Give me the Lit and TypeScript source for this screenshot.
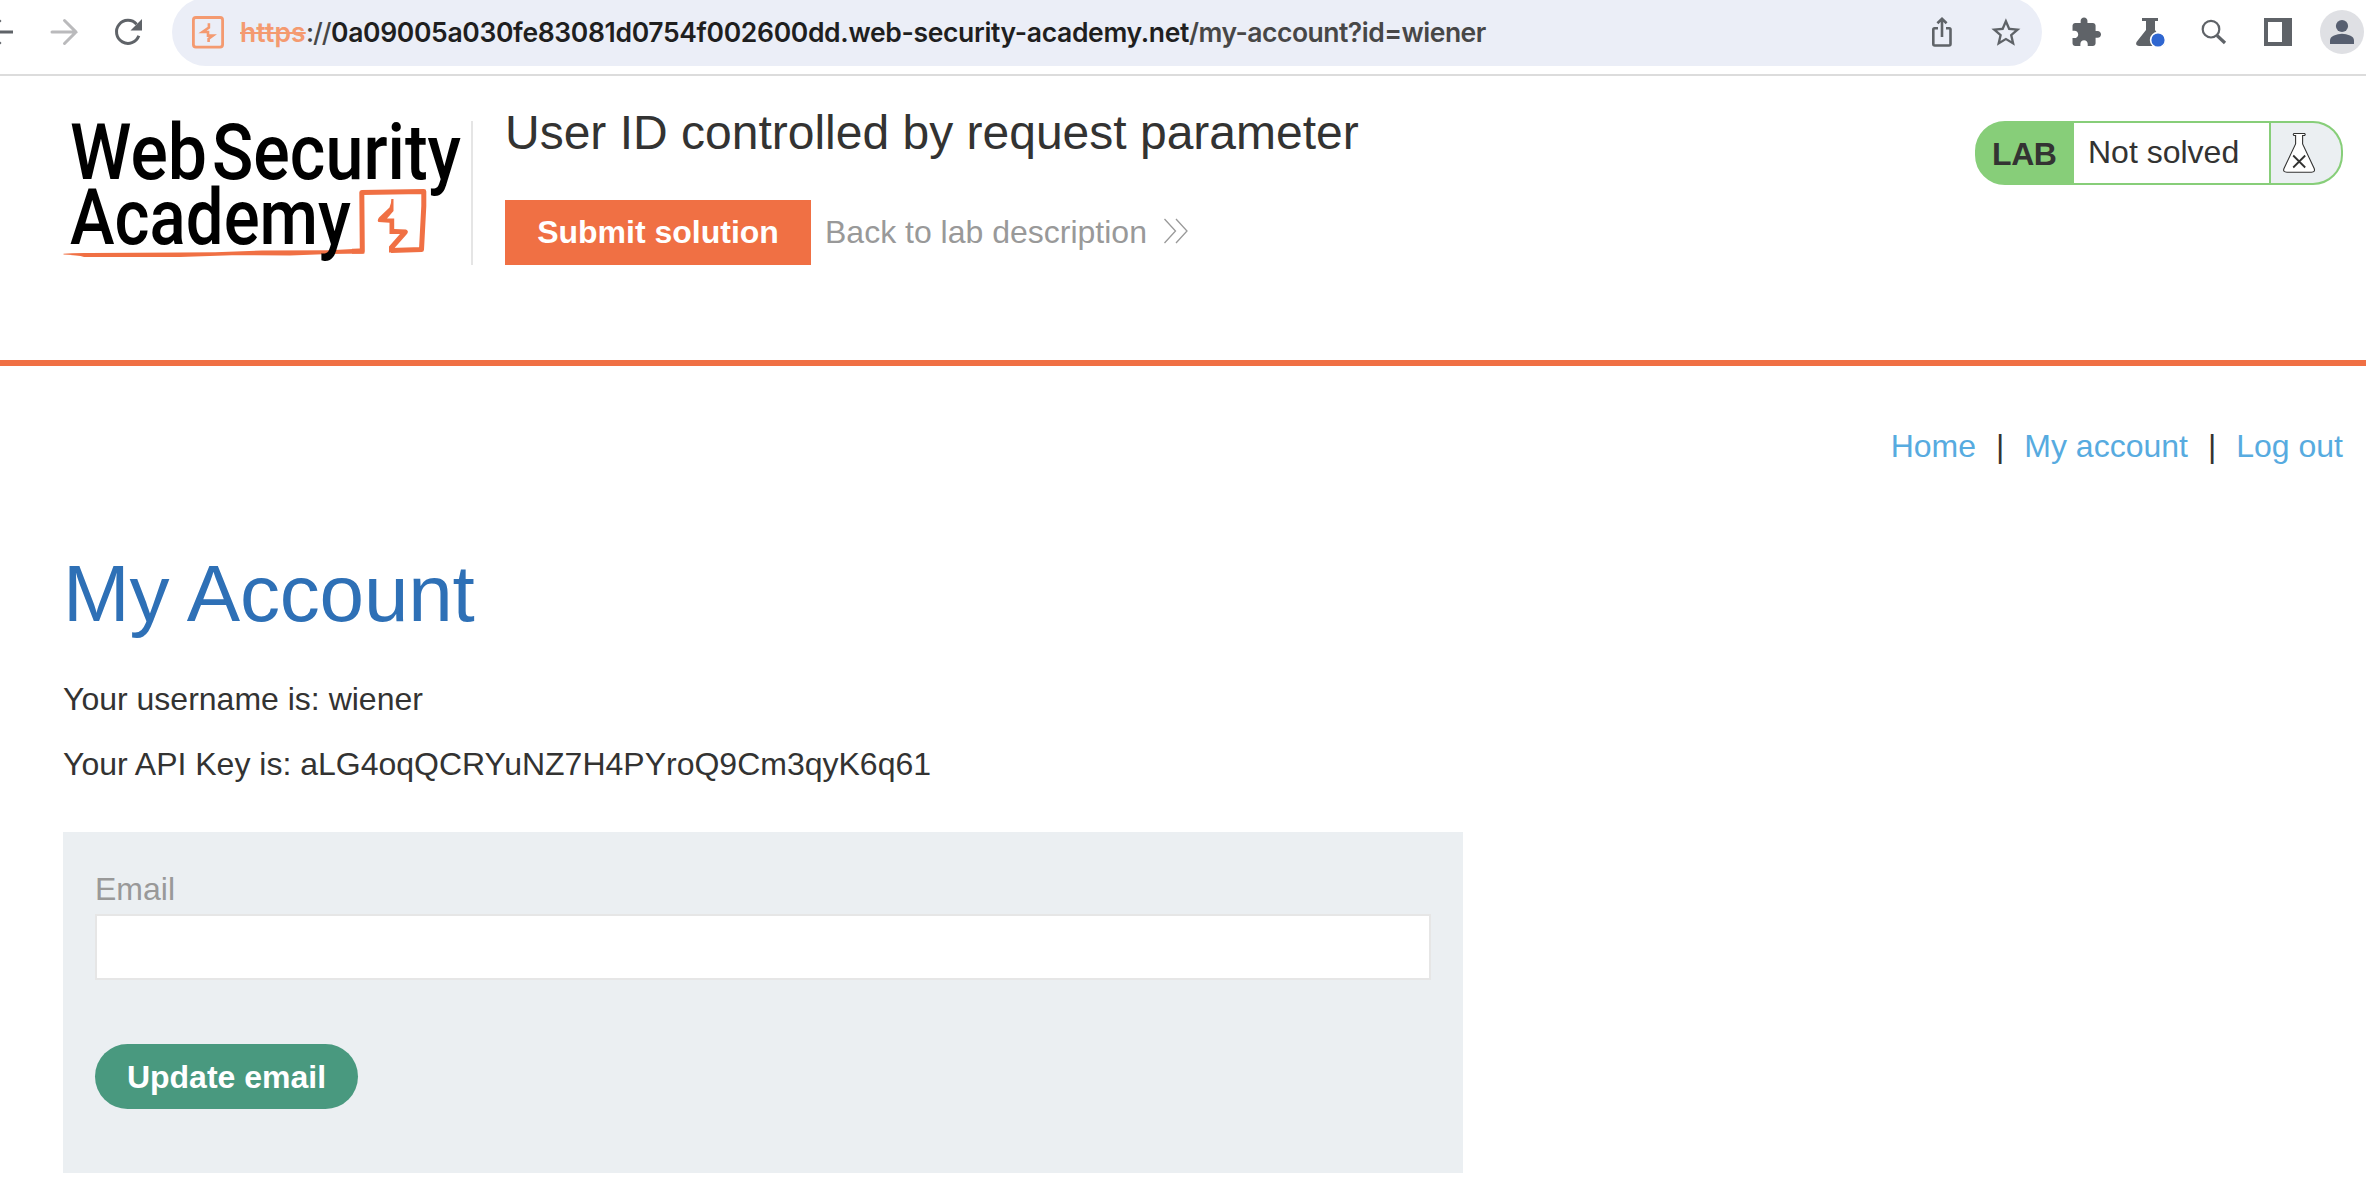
import { LitElement, html, css, svg } from "lit";
import { customElement } from "lit/decorators.js";

@customElement("browser-toolbar")
class BrowserToolbar extends LitElement {
  static styles = css`
    :host { display: block; }
    .bar { display: flex; height: 74px; border-bottom: 2px solid #dcdcdc; background: #fff; overflow: hidden; }
    .bar > svg, .omnibox > svg { flex: none; display: block; }
    .nav { width: 172px; height: 66px; }
    .omnibox {
      display: flex; align-items: flex-start; width: 1870px; height: 68px; flex: none; margin: -2px 12px 0 0;
      background: #ebeef7; border-radius: 34px;
    }
    .omnibox > svg, .url { margin-top: 2px; }
    .url {
      flex: 1; display: flex; line-height: 65px; white-space: nowrap;
      font-family: Inter, "Liberation Sans", sans-serif; font-weight: 600; font-size: 26.5px; color: #474747;
    }
    .scheme { color: #f49a70; text-decoration: line-through; text-decoration-thickness: 2px; width: 66px; letter-spacing: 0.1px; }
    .colon { width: 25px; letter-spacing: -1px; font-weight: 500; }
    .host { color: #1f1f1f; width: 858px; letter-spacing: -0.34px; }
    .path { letter-spacing: -0.5px; }
  `;

  render() {
    return html`
      <div class="bar">
        <svg class="nav" viewBox="0 0 172 66" fill="none" stroke-width="3">
          <path d="M13 32H-12M0.5 20L-11.5 32L0.5 44" stroke="#5f6368" />
          <path d="M52 32H76M64.5 20.5L76 32L64.5 43.5" stroke="#bababc" stroke-linecap="round" />
          <path d="M136.6 24.2A11.5 11.5 0 1 0 138.8 35.8" stroke="#5f6368" />
          <path d="M142 19V30.5H130.5Z" fill="#5f6368" />
        </svg>
        <div class="omnibox">
          <svg width="68" height="66" viewBox="172 0 68 66" fill="none" stroke="#f49a70" stroke-width="2.8">
            <rect x="193.4" y="17.5" width="29.2" height="29.6" rx="2.5" />
            <path d="M208.900 23.300V27.500L202.500 32H208V35.600H213L208.600 38.800V42" stroke-width="2.6" />
          </svg>
          <div class="url">
            <span class="scheme">https</span><span class="colon">://</span><span class="host">0a09005a030fe83081d0754f002600dd.web-security-academy.net</span><span class="path">/my-account?id=wiener</span>
          </div>
          <svg width="64" height="66" viewBox="1910 0 64 66" fill="none" stroke="#5f6368" stroke-width="2.6">
            <path d="M1938 28.3H1934.5Q1933.3 28.3 1933.3 29.5V44Q1933.3 45.5 1934.8 45.5H1949Q1950.5 45.5 1950.5 44V29.5Q1950.5 28.3 1949.3 28.3H1946M1942 37V20M1937.4 23.3L1942 18.8L1946.6 23.3" />
          </svg>
          <svg width="68" height="66" viewBox="1974 0 68 66">
            <path transform="translate(1988.5 15.3) scale(1.45)" fill="#5f6368" d="M22 9.24l-7.19-.62L12 2 9.19 8.63 2 9.24l5.46 4.73L5.82 21 12 17.27 18.18 21l-1.63-7.03L22 9.24zM12 15.4l-3.76 2.27 1-4.28-3.32-2.88 4.38-.38L12 6.1l1.71 4.04 4.38.38-3.32 2.88 1 4.28L12 15.4z" />
          </svg>
        </div>
        <svg width="64" height="66" viewBox="2054 0 64 66">
          <path transform="translate(2069.8 16.1) scale(1.357)" fill="#5f6368" d="M20.5 11H19V7c0-1.1-.9-2-2-2h-4V3.5C13 2.12 11.88 1 10.5 1S8 2.12 8 3.5V5H4c-1.1 0-1.99.9-1.99 2v3.8H3.5c1.49 0 2.7 1.21 2.7 2.7s-1.21 2.7-2.7 2.7H2V20c0 1.1.9 2 2 2h3.8v-1.5c0-1.49 1.21-2.7 2.7-2.7 1.49 0 2.7 1.21 2.7 2.7V22H17c1.1 0 2-.9 2-2v-4h1.5c1.38 0 2.5-1.12 2.5-2.5S21.88 11 20.5 11z" />
        </svg>
        <svg width="64" height="66" viewBox="2118 0 64 66">
          <path fill="#5f6368" d="M2142 18H2158V21H2155V30L2164 43Q2165 46 2162 46H2139Q2135 45.5 2136.5 42L2146 30V21H2142Z" />
          <circle cx="2158" cy="40" r="7.4" fill="#2f66d0" stroke="#fff" stroke-width="1.6" />
        </svg>
        <svg width="64" height="66" viewBox="2182 0 64 66" fill="none" stroke="#5f6368">
          <circle cx="2211" cy="29.2" r="8.3" stroke-width="2.2" />
          <path d="M2217 35.5L2225 43" stroke-width="3.2" />
        </svg>
        <svg width="64" height="66" viewBox="2246 0 64 66">
          <path fill="#5f6368" fill-rule="evenodd" d="M2264 18H2292V46H2264ZM2268 22V42H2282V22Z" />
        </svg>
        <svg width="56" height="66" viewBox="2310 0 56 66">
          <circle cx="2342" cy="32" r="22" fill="#dfe0e4" />
          <circle cx="2342" cy="26" r="6.1" fill="#575f70" />
          <path fill="#575f70" d="M2330 44V40.5Q2330 37 2334 35.4Q2342 32 2350 35.4Q2354 37 2354 40.5V44Z" />
        </svg>
      </div>
    `;
  }
}

@customElement("academy-logo")
class AcademyLogo extends LitElement {
  static styles = css`
    :host { display: block; }
    svg { display: block; overflow: visible; }
    .word { font-family: Roboto, "Liberation Sans", sans-serif; font-weight: 500; font-size: 77.5px; fill: #000; }
  `;

  render() {
    const word = (text: string, x: number, y: number, width: number) => svg`
      <text class="word" x=${x} y=${y} textLength=${width} lengthAdjust="spacingAndGlyphs">${text}</text>`;
    return html`
      <svg width="408" height="160" viewBox="63 106 408 160">
        <path fill="#f07044" d="M63.500 253.800Q72 252.800 90 253L180 252.400L215 252.200L262 250.600L330 250.200L362 248.600L364.500 253.500L330 254L290 255.400L232 255.200L180 257L84 257Q78 255.200 63.500 254.600Z" />
        <path fill="none" stroke="#f07044" stroke-width="5" stroke-linejoin="round"
          d="M352 251.200L362.300 251.200L361.800 192.600L423.800 191.500V206L421.500 249.500L391 250.500" />
        <path fill="#f07044" d="M389 252.500V246.500L400 234H389.500V222.800L378.500 222Q376.800 221 379 217.500L389.500 207.500Q391.500 203 391.300 199H393.500V211L387 218.500H394.200V229L406 229.500Q409.500 231 406.500 234.500L395 247.500L393 252.500Z" />
        ${word("Web", 70, 178.700, 137)}
        ${word("Security", 212, 178.700, 249)}
        ${word("Academy", 70, 243.500, 281)}
      </svg>
    `;
  }
}

@customElement("lab-status")
class LabStatus extends LitElement {
  static styles = css`
    :host { display: block; }
    .status {
      box-sizing: border-box; width: 368px; height: 64px; display: flex; overflow: hidden;
      border: 2px solid #87ce79; border-radius: 30px; background: #87ce79;
      font-size: 32px; line-height: 60px; color: #333332;
    }
    .tag { width: 97px; box-sizing: border-box; padding: 1px 0 0 15px; font-weight: bold; letter-spacing: -0.4px; }
    .state { width: 197px; box-sizing: border-box; padding-left: 14px; background: #fff; border-right: 2px solid #87ce79; height: 60px; line-height: 58px; }
    .flask { flex: 1; background: #ebeff2; }
    .flask svg { display: block; }
  `;

  render() {
    return html`
      <div class="status">
        <div class="tag">LAB</div>
        <div class="state">Not solved</div>
        <div class="flask">
          <svg width="70" height="60" viewBox="2271 123 70 60" fill="#fff" stroke="#333332">
            <path stroke-width="1.100" d="M2294 133.500H2304.500Q2306 134.500 2304.500 135.500H2302.600V144L2314.200 168.500Q2315.500 172.200 2311.500 172.200H2287Q2282.500 172.200 2284 168.500L2295.600 144V135.500H2294Q2292.500 134.500 2294 133.500Z" />
            <path stroke-width="1.800" d="M2293.200 155.500L2305.200 167.500M2305.200 155.500L2293.200 167.500" />
          </svg>
        </div>
      </div>
    `;
  }
}

@customElement("app-root")
class AppRoot extends LitElement {
  static styles = css`
    :host {
      display: block; width: 2366px; height: 1178px; overflow: hidden; background: #fff;
      font-family: "Liberation Sans", Arial, sans-serif; font-size: 32px; line-height: 48px; color: #333332;
    }
    .header {
      box-sizing: border-box; height: 290px; border-bottom: 6px solid #f07044;
      padding: 30px 23px 0 63px; display: flex; align-items: flex-start;
    }
    .rule { width: 2px; height: 144px; background: #e5e5e5; margin-top: 15px; }
    .intro { flex: 1; padding-left: 32px; }
    .title { margin: 0; font-weight: normal; font-size: 48px; line-height: 54px; white-space: nowrap; }
    .actions { display: flex; align-items: flex-start; margin-top: 40px; }
    .submit { background: #f07044; color: #fff; font-weight: bold; height: 65px; line-height: 64px; width: 306px; text-align: center; }
    .back { display: flex; color: #999; line-height: 64px; padding-left: 14px; gap: 16px; }
    .back svg { margin-top: 18px; }
    .lab { margin-top: 15px; }
    .links { display: flex; justify-content: flex-end; padding: 56px 23px 0; gap: 20px; height: 48px; }
    .links a { color: #57abe0; }
    .main { padding: 0 63px; }
    .heading { margin: 78px 0 0; font-size: 80px; font-weight: normal; line-height: 92px; letter-spacing: -0.2px; color: #2e70b6; }
    .user { margin: 35px 0 0; }
    .key { margin: 17px 0 0; }
    .form { box-sizing: border-box; width: 1400px; height: 341px; background: #ebeff2; margin-top: 44px; padding: 33px 32px; }
    .label { color: #999; display: block; line-height: 48px; }
    .field { box-sizing: border-box; display: block; width: 1336px; height: 66px; margin: 1px 0 0; padding: 0 16px; border: 2px solid #e6e6e6; border-radius: 0; background: #fff; outline: none; }
    .update { display: block; box-sizing: border-box; border: 0; border-radius: 33px; margin-top: 64px; width: 263px; height: 65px; background: #49997f; color: #fff; font: bold 32px/64px "Liberation Sans", Arial, sans-serif; padding: 0; text-align: center; }
  `;

  render() {
    return html`
      <browser-toolbar></browser-toolbar>
      <div class="header">
        <academy-logo></academy-logo>
        <div class="rule"></div>
        <div class="intro">
          <h2 class="title">User ID controlled by request parameter</h2>
          <div class="actions">
            <div class="submit">Submit solution</div>
            <div class="back">
              <span>Back to lab description</span>
              <svg width="26" height="26" viewBox="0 0 26 26" fill="none" stroke="#999" stroke-width="1.300">
                <path d="M1.500 1L12.500 13L1.500 25M13 1L24 13L13 25" />
              </svg>
            </div>
          </div>
        </div>
        <lab-status class="lab"></lab-status>
      </div>
      <div class="links"><a>Home</a><span>|</span><a>My account</a><span>|</span><a>Log out</a></div>
      <div class="main">
        <h1 class="heading">My Account</h1>
        <p class="user">Your username is: wiener</p>
        <p class="key">Your API Key is: aLG4oqQCRYuNZ7H4PYroQ9Cm3qyK6q61</p>
        <div class="form">
          <label class="label">Email</label>
          <input class="field" type="email" />
          <button class="update">Update email</button>
        </div>
      </div>
    `;
  }
}
